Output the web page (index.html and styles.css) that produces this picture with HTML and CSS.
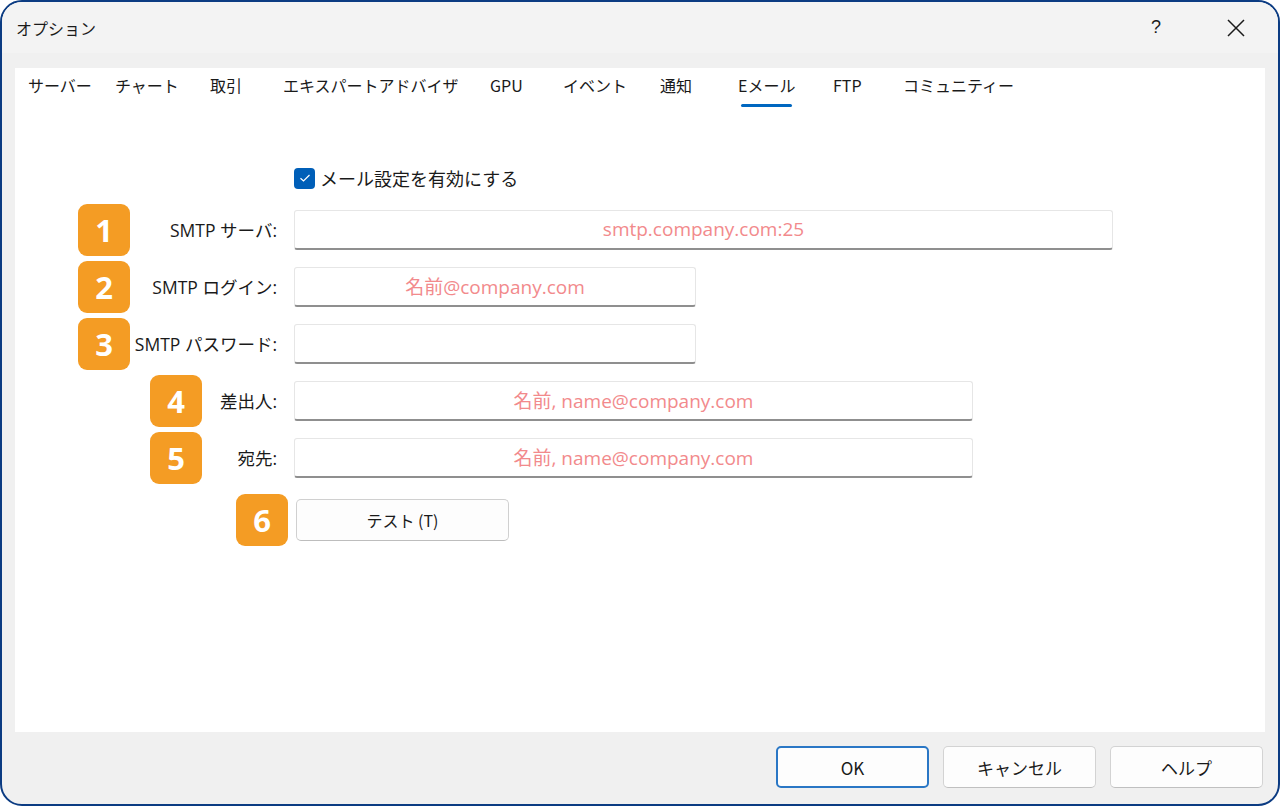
FILE: index.html
```html
<!DOCTYPE html>
<html lang="ja">
<head>
    <meta charset="UTF-8">
    <meta name="viewport" content="width=device-width, initial-scale=1.0">
    <title>オプション</title>
    <link rel="stylesheet" href="styles.css">
</head>
<body>
    <div class="window">
        <div class="titlebar">
            <span class="title">オプション</span>
            <span class="help">?</span>
            <span class="close">
                <svg width="20" height="20" viewBox="0 0 20 20">
                    <path d="M2 2 L18 18 M18 2 L2 18" stroke="#1a1a1a" stroke-width="1.5" fill="none"/>
                </svg>
            </span>
        </div>
        <div class="content">
            <div class="panel">
                <div class="tabs">
                    <div class="tab"><span>サーバー</span></div>
                    <div class="tab"><span>チャート</span></div>
                    <div class="tab"><span>取引</span></div>
                    <div class="tab"><span>エキスパートアドバイザ</span></div>
                    <div class="tab"><span>GPU</span></div>
                    <div class="tab"><span>イベント</span></div>
                    <div class="tab"><span>通知</span></div>
                    <div class="tab active"><span>Eメール</span></div>
                    <div class="tab"><span>FTP</span></div>
                    <div class="tab"><span>コミュニティー</span></div>
                </div>

                <div class="form">
                    <label class="check-row">
                        <span class="checkbox">
                            <svg width="12" height="10" viewBox="0 0 12 10">
                                <path d="M1.5 5.2 L4.5 8 L10.5 2" stroke="#fff" stroke-width="1.2" fill="none"/>
                            </svg>
                        </span>
                        <span class="check-label">メール設定を有効にする</span>
                    </label>

                    <div class="row">
                        <div class="cell far"><span class="badge">1</span><span class="label">SMTP サーバ:</span></div>
                        <input class="field wide" type="text" value="smtp.company.com:25">
                    </div>
                    <div class="row">
                        <div class="cell far"><span class="badge">2</span><span class="label">SMTP ログイン:</span></div>
                        <input class="field short" type="text" value="名前@company.com">
                    </div>
                    <div class="row">
                        <div class="cell far"><span class="badge">3</span><span class="label">SMTP パスワード:</span></div>
                        <input class="field short" type="password" value="">
                    </div>
                    <div class="row">
                        <div class="cell mid"><span class="badge">4</span><span class="label">差出人:</span></div>
                        <input class="field medium" type="text" value="名前, name@company.com">
                    </div>
                    <div class="row">
                        <div class="cell mid"><span class="badge">5</span><span class="label">宛先:</span></div>
                        <input class="field medium" type="text" value="名前, name@company.com">
                    </div>
                    <div class="row test-row">
                        <div class="cell near"><span class="badge">6</span></div>
                        <button class="test-btn" type="button">テスト (T)</button>
                    </div>
                </div>
            </div>
        </div>
        <div class="footer">
            <button class="btn primary" type="button">OK</button>
            <button class="btn" type="button">キャンセル</button>
            <button class="btn" type="button">ヘルプ</button>
        </div>
    </div>
</body>
</html>
```

FILE: styles.css
```css
body {
    margin: 0;
    padding: 0;
    background-color: #fff;
    font-family: "Noto Sans CJK JP", "Noto Sans", sans-serif;
    color: #1a1a1a;
}
.window {
    width: 1280px;
    height: 806px;
    box-sizing: border-box;
    border: 2px solid #0b3b82;
    border-radius: 22px;
    background-color: #f0f0f0;
    overflow: hidden;
    display: flex;
    flex-direction: column;
}
/* Barra de titulo */
.titlebar {
    height: 51px;
    flex: none;
    display: flex;
    align-items: center;
    background-color: #f3f3f3;
    padding-left: 14px;
}
.title {
    font-size: 16px;
    flex: 1;
}
.help {
    font-size: 18px;
    width: 75px;
    text-align: left;
    font-family: "Liberation Sans", sans-serif;
}
.close {
    display: flex;
    width: 52px;
}
.content {
    flex: 1;
    padding: 15px 13px 0 13px;
    display: flex;
}
.panel {
    flex: 1;
    background-color: #fff;
}
/* Abas */
.tabs {
    height: 40px;
    display: grid;
    grid-template-columns: 87px 95px 73px 207px 73px 97px 78px 95px 70px auto;
    padding-left: 13px;
    font-size: 16px;
}
.tab span {
    display: inline-block;
    line-height: 20px;
    padding-top: 7px;
}
.tab.active span::after {
    content: "";
    display: block;
    width: 51px;
    height: 3px;
    border-radius: 2px;
    background-color: #0067c0;
    margin: 9px auto 0 auto;
}
/* Formulario */
.form {
    padding-top: 58px;
}
.check-row {
    display: flex;
    align-items: center;
    height: 24px;
    padding-left: 279px;
    margin-bottom: 11px;
}
.checkbox {
    width: 21px;
    height: 21px;
    border-radius: 4px;
    background-color: #005fb8;
    display: flex;
    align-items: center;
    justify-content: center;
    margin-right: 5px;
}
.check-label {
    font-size: 18px;
}
.row {
    display: flex;
    align-items: center;
    height: 57px;
}
.cell {
    width: 279px;
    box-sizing: border-box;
    display: flex;
    align-items: center;
    padding-right: 17px;
}
.cell.far { padding-left: 63px; }
.cell.mid { padding-left: 135px; }
.cell.near { padding-left: 221px; padding-right: 6px; }
.badge {
    width: 52px;
    height: 52px;
    flex: none;
    border-radius: 9px;
    background-color: #f49c24;
    color: #fff;
    font-family: "Open Sans", sans-serif;
    font-weight: bold;
    font-size: 31px;
    display: flex;
    align-items: center;
    justify-content: center;
}
.label {
    margin-left: auto;
    font-family: "Open Sans", "Noto Sans CJK JP", sans-serif;
    font-size: 17.5px;
    white-space: nowrap;
}
.field {
    height: 40px;
    box-sizing: border-box;
    border: 1px solid #e6e6e6;
    border-bottom: 2px solid #8f8f8f;
    border-radius: 3px;
    background-color: #fff;
    text-align: center;
    font-family: "Open Sans", "Noto Sans CJK JP", sans-serif;
    font-size: 19px;
    color: #f28a8c;
    outline: none;
    padding: 0 6px;
}
.field.wide { width: 819px; }
.field.short { width: 402px; }
.field.medium { width: 679px; }
.test-row {
    margin-top: 5px;
}
.test-btn {
    width: 213px;
    height: 42px;
    margin-left: 2px;
    border: 1px solid #d0d0d0;
    border-bottom-color: #bdbdbd;
    border-radius: 5px;
    background-color: #fdfdfd;
    font-family: "Noto Sans CJK JP", "Noto Sans", sans-serif;
    font-size: 16px;
    color: #1a1a1a;
}
/* Rodape */
.footer {
    height: 72px;
    box-sizing: border-box;
    flex: none;
    display: flex;
    justify-content: flex-end;
    align-items: flex-start;
    padding: 14px 15px 0 0;
    gap: 14px;
}
.btn {
    width: 153px;
    height: 42px;
    border: 1px solid #d3d3d3;
    border-bottom-color: #c0c0c0;
    border-radius: 5px;
    background-color: #fdfdfd;
    font-family: "Noto Sans CJK JP", "Noto Sans", sans-serif;
    font-size: 17px;
    color: #1a1a1a;
}
.btn.primary {
    border: 2px solid #2a77c5;
}
```
